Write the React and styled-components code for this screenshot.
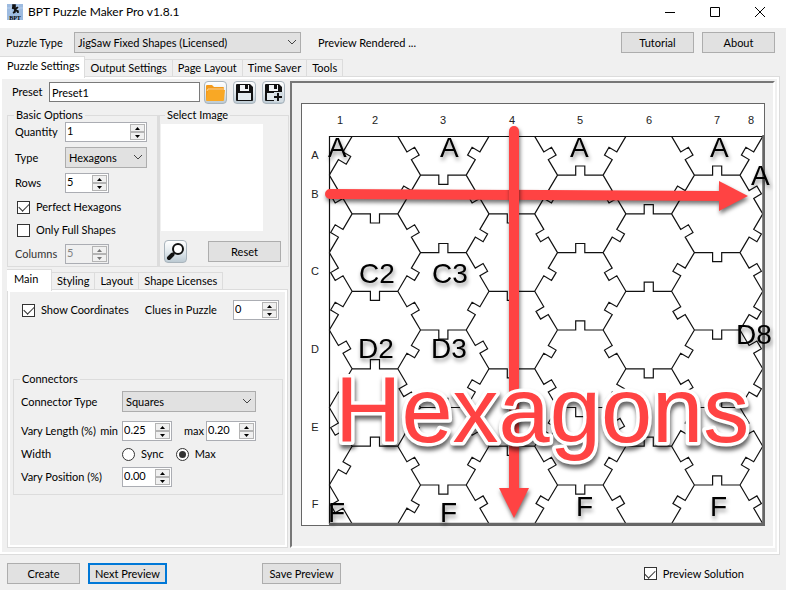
import React, { useState } from 'react';
import styled, { createGlobalStyle, css } from 'styled-components';

const GlobalStyle = createGlobalStyle`
  * {
    box-sizing: border-box;
  }
  body {
    margin: 0;
    background: #f0f0f0;
    color: #000;
    font-family: Lato, "Liberation Sans", sans-serif;
    font-size: 11px;
    line-height: 14px;
  }
  button, input, select {
    font: inherit;
    color: inherit;
    margin: 0;
  }
`;

const Window = styled.div`
  display: flex;
  flex-direction: column;
  min-height: 100vh;
`;

const TitleBar = styled.header`
  display: flex;
  align-items: center;
  height: 28px;
  padding: 0 4px 4px 7px;
  background: #fff;
`;

const Title = styled.h1`
  flex: 1;
  margin: 0 0 0 5px;
  font-size: 12px;
  font-weight: 400;
  line-height: 16px;
`;

const CaptionButton = styled.button`
  display: flex;
  align-items: center;
  justify-content: center;
  width: 45px;
  height: 24px;
  padding: 0;
  border: none;
  background: none;
`;

const Toolbar = styled.div`
  display: flex;
  align-items: center;
  gap: 8px;
  height: 28px;
  padding: 1px 11px 0 6px;
`;

const Label = styled.label`
  white-space: nowrap;
  width: ${({ $width }) => ($width ? `${$width}px` : 'auto')};
  color: ${({ $disabled }) => ($disabled ? '#333' : 'inherit')};
`;

const Status = styled.span`
  flex: 1;
  padding-left: 9px;
`;

const PushButton = styled.button`
  width: ${({ $width }) => $width || 73}px;
  height: 21px;
  padding: 0;
  border: 1px solid #adadad;
  background: #e1e1e1;
  white-space: nowrap;
  ${({ $focused }) => $focused && css`
    border: 2px solid #0078d7;
  `}
`;

const SelectWrap = styled.span`
  position: relative;
  display: inline-block;
  width: ${({ $width }) => $width}px;
  height: 21px;

  select {
    width: 100%;
    height: 100%;
    padding: 0 18px 0 3px;
    border: 1px solid #adadad;
    border-radius: 0;
    background: #e1e1e1;
    appearance: none;
  }
  svg {
    position: absolute;
    right: 4px;
    top: 7px;
    pointer-events: none;
  }
`;

const TabList = styled.div`
  display: flex;
  align-items: flex-end;
  height: ${({ $height }) => $height || 20}px;
`;

const Tab = styled.button`
  height: 17px;
  padding: 0 5px;
  border: 1px solid #dcdcdc;
  border-width: 1px 1px 0 0;
  background: #f0f0f0;
  text-align: left;
  white-space: nowrap;
  ${({ $active }) => $active && css`
    z-index: 1;
    min-width: 45px;
    height: 22px;
    margin-bottom: -2px;
    padding: 0 5px 3px 7px;
    background: #fff;
  `}
`;

const TabPage = styled.div`
  border: 1px solid #dcdcdc;
  background: #f0f0f0;
  box-shadow: inset 0 0 0 2px #fff;
`;

const MainPage = styled(TabPage)`
  display: flex;
  flex: 1;
  align-items: stretch;
  margin-right: 6px;
  padding: 4px 4px 6px 7px;
  border-left: none;
`;

const Settings = styled.div`
  display: flex;
  flex-direction: column;
  flex: 0 0 282px;
`;

const PresetRow = styled.div`
  display: flex;
  align-items: center;
  height: 22px;
  padding-left: 5px;
`;

const TextBox = styled.input`
  width: 151px;
  height: 20px;
  padding: 0 2px;
  border: 1px solid #7a7a7a;
  background: #fff;
`;

const IconButton = styled.button`
  display: flex;
  align-items: center;
  justify-content: center;
  width: 23px;
  height: 23px;
  padding: 0;
  border: 1px solid #a9b4bc;
  border-radius: 4px;
  background: linear-gradient(#fff, #e3eaee 50%, #bccad3);
`;

const IconBar = styled.div`
  display: flex;
  gap: 6px;
  margin-left: 4px;
`;

const Groups = styled.div`
  display: grid;
  grid-template-columns: 151px 1fr;
  margin-top: 5px;
`;

const Group = styled.fieldset`
  min-width: 0;
  margin: 0;
  padding: 0 7px 2px;
  border: 1px solid #dcdcdc;

  legend {
    padding: 0 2px;
    margin-left: -1px;
  }
`;

const Rows = styled.div`
  display: flex;
  flex-direction: column;
  gap: 5px;
`;

const Row = styled.div`
  display: flex;
  align-items: center;
  min-height: 18px;
`;

const CheckLabel = styled.label`
  display: inline-flex;
  align-items: center;
  gap: 6px;
  margin-left: ${({ $indent }) => $indent || 0}px;
  white-space: nowrap;

  input {
    display: grid;
    place-content: center;
    width: 13px;
    height: 13px;
    border: 1px solid #333;
    border-radius: ${({ $round }) => ($round ? '50%' : '0')};
    background: #fff;
    appearance: none;
  }
  input[type='checkbox']:checked::before {
    content: '';
    width: 9px;
    height: 5px;
    margin-top: -2px;
    border: solid #333;
    border-width: 0 0 1px 1px;
    transform: rotate(-45deg);
  }
  input[type='radio']:checked::before {
    content: '';
    width: 7px;
    height: 7px;
    border-radius: 50%;
    background: #333;
  }
`;

const SpinBox = styled.span`
  display: flex;
  width: ${({ $width }) => $width}px;
  height: 20px;
  padding: 1px;
  border: 1px solid #abadb3;
  background: ${({ $disabled }) => ($disabled ? '#f0f0f0' : '#fff')};

  input {
    flex: 1;
    min-width: 0;
    padding: 0 0 2px;
    border: none;
    background: none;
    color: ${({ $disabled }) => ($disabled ? '#838383' : '#000')};
  }
`;

const SpinArrows = styled.span`
  display: flex;
  flex-direction: column;
  width: 15px;

  button {
    display: flex;
    flex: 1;
    align-items: center;
    justify-content: center;
    padding: 0;
    border: 1px solid #b4b4b4;
    background: #f0f0f0;
  }
`;

const ImageGroup = styled(Group)`
  display: flex;
  flex-direction: column;
  padding: 0 7px 3px 1px;
  border-left-width: 2px;

  legend {
    margin-left: 4px;
  }
`;

const ImageBox = styled.div`
  width: 102px;
  height: 107px;
  margin-top: 2px;
  background: #fff;
`;

const ImageActions = styled.div`
  display: flex;
  align-items: center;
  justify-content: space-between;
  margin-top: auto;
  padding-left: 3px;
`;

const OptionTabs = styled.div`
  display: flex;
  flex: 1;
  flex-direction: column;
  padding: 1px 1px 0 0;
`;

const OptionPage = styled(TabPage)`
  flex: 1;
  padding: 10px 4px 10px 5px;
`;

const CoordinatesRow = styled(Row)`
  justify-content: space-between;
  margin-bottom: 52px;
  padding: 0 4px 0 9px;
`;

const Spacer = styled.span`
  flex: 1;
`;

const ConnectorGroup = styled(Group)`
  padding-bottom: 7px;

  ${Rows} {
    gap: 4px;
    padding-top: 5px;
  }
  ${Row}:first-child {
    margin-bottom: 5px;
  }
`;

const VaryLabel = styled.span`
  display: flex;
  justify-content: space-between;
  width: 101px;
  padding-right: 4px;
  white-space: nowrap;
`;

const MaxLabel = styled.label`
  width: 34px;
  padding-right: 2px;
  text-align: right;
`;

const PreviewFrame = styled.section`
  flex: 1;
  margin-left: 1px;
  padding: 20px 8px 0 9px;
  border: 2px solid;
  border-color: #777 #fff #fff #777;
`;

const Board = styled.svg`
  display: block;
  width: 100%;
  overflow: visible;
  font-family: "Liberation Sans", Arial, sans-serif;
`;

const CoordText = styled.text`
  font-size: 11px;
  fill: #222;
  text-anchor: middle;
`;

const CellText = styled.text`
  font-size: 28px;
  filter: drop-shadow(1px 3px 2px rgba(0, 0, 0, 0.45));
`;

const Arrow = styled.g`
  fill: #ff4343;
  stroke: #ff4343;
  stroke-width: 10;
  stroke-linecap: round;
  filter: drop-shadow(1px 3px 2px rgba(0, 0, 0, 0.55));

  polygon {
    stroke: none;
  }
`;

const Caption = styled.text`
  font-size: 92px;
  fill: #ff4343;
  stroke: #fff;
  stroke-width: 7px;
  stroke-linejoin: round;
  paint-order: stroke;
  filter: drop-shadow(1px 4px 2px rgba(0, 0, 0, 0.6));
`;

const Footer = styled.footer`
  display: flex;
  align-items: center;
  height: 35px;
  padding: 2px 42px 0 7px;
`;

const FooterButtons = styled.div`
  display: flex;
  gap: 8px;
  width: 255px;
`;

/* ---------- icons ---------- */

const AppIcon = () => (
  <svg width="16" height="16" viewBox="0 0 16 16">
    <rect width="16" height="16" fill="#9dbbe0" />
    <path d="M4 0v9M11 0v9M0 4h16" stroke="#b9d0ec" />
    <path d="M6 1h2v2h-2zM5 4l4 1 2-2M8 4v4l-2 1M8 6l3 1v2" fill="#111" stroke="#111" strokeWidth="1.6" />
    <text x="8" y="15.5" fontSize="6" fontWeight="700" fontFamily="Liberation Serif, serif" textAnchor="middle">BPT</text>
  </svg>
);

const Chevron = () => (
  <svg width="10" height="7" viewBox="0 0 10 7" fill="none" stroke="#444">
    <path d="M1 1l4 4 4-4" />
  </svg>
);

const FolderIcon = () => (
  <svg width="21" height="19" viewBox="0 0 21 19">
    <path d="M1 17V3q0-1 1-1h5l2 2h9q1 0 1 1v2H4L2 17z" fill="#f39a1b" />
    <path d="M3 7h17l-1 10q0 1-1 1H2q-1 0-1-1z" fill="#f9a825" />
    <path d="M2 8l1-2h16" fill="none" stroke="#fbe3bb" strokeWidth=".8" />
  </svg>
);

const SaveIcon = ({ plus }) => (
  <svg width="19" height="19" viewBox="0 0 19 19">
    <path d="M1 2q0-1 1-1h13l3 3v13q0 1-1 1H2q-1 0-1-1z" fill="#111" />
    <path d="M5 2h9v6H5z" fill="#f2f5f7" />
    <path d="M10 2h3v4h-3z" fill="#111" />
    <path d="M3 10h13v7H3z" fill="#e3eaee" />
    {plus && (
      <>
        <path d="M10 9h9v10H10z" fill="#d3dce2" />
        <path d="M14 10v8M10 14h8" stroke="#111" strokeWidth="2" />
      </>
    )}
  </svg>
);

const SearchIcon = () => (
  <svg width="19" height="19" viewBox="0 0 19 19" fill="none" stroke="#111">
    <circle cx="12" cy="7" r="5" strokeWidth="2" fill="#fff" />
    <path d="M8 11l-1.500 1.500" strokeWidth="2" />
    <path d="M6.500 12.500L3 16" strokeWidth="4" strokeLinecap="round" />
  </svg>
);

/* ---------- form parts ---------- */

const Select = ({ id, width, options }) => (
  <SelectWrap $width={width}>
    <select id={id}>
      {options.map((option) => <option key={option}>{option}</option>)}
    </select>
    <Chevron />
  </SelectWrap>
);

const Spin = ({ id, width, value, disabled }) => (
  <SpinBox $width={width} $disabled={disabled}>
    <input id={id} defaultValue={value} disabled={disabled} />
    <SpinArrows>
      <button type="button" aria-label="Increase" disabled={disabled}>
        <svg width="5" height="3" viewBox="0 0 5 3"><path d="M0 3l2.500-3L5 3z" fill={disabled ? '#777' : '#000'} /></svg>
      </button>
      <button type="button" aria-label="Decrease" disabled={disabled}>
        <svg width="5" height="3" viewBox="0 0 5 3"><path d="M0 0l2.500 3L5 0z" fill={disabled ? '#777' : '#000'} /></svg>
      </button>
    </SpinArrows>
  </SpinBox>
);

const Tabs = ({ names, height }) => {
  const [active, setActive] = useState(names[0]);
  return (
    <TabList role="tablist" $height={height}>
      {names.map((name) => (
        <Tab key={name} role="tab" $active={name === active} onClick={() => setActive(name)}>{name}</Tab>
      ))}
    </TabList>
  );
};

/* ---------- puzzle board ---------- */

const LEFT = 28.3;
const TOP = 33.4;
const PITCH = 68.45; // distance between two columns of hexagons
const SLANT = 22.8;
const HALF = 38.73; // half the height of a hexagon

// side on which the connector of each slanted edge sticks out, top to bottom
const SLANTED = [
  'RLLLLRRLRL',
  'RLRRRRLRRR',
  'LLRRLRLLLR',
  'RRLRLRRRRL',
  'LLRLLLRRLR',
  'RLRLLRRRRL',
  'LRRRRRRLLR',
];

// the same for the horizontal edges: up or down
const FLAT = ['DDUU', 'DUDUD', 'DDDD', 'UUUDD', 'UUDU', 'UDDUU'];

const edgePath = (x0, y0, x1, y1, side) => {
  const dx = x1 - x0;
  const dy = y1 - y0;
  const ox = dy * 0.2 * side;
  const oy = -dx * 0.2 * side;
  const at = (t, out) => `${(x0 + dx * t + ox * out).toFixed(1)} ${(y0 + dy * t + oy * out).toFixed(1)}`;
  return `M${at(0, 0)}L${at(0.4, 0)}L${at(0.4, 1)}L${at(0.6, 1)}L${at(0.6, 0)}L${at(1, 0)}`;
};

const boardPath = [
  ...SLANTED.flatMap((sides, strip) =>
    [...sides].map((side, k) => {
      const x = LEFT + strip * PITCH;
      const fromRight = (strip + k) % 2 === 0;
      return edgePath(
        fromRight ? x + SLANT : x, TOP + k * HALF,
        fromRight ? x : x + SLANT, TOP + (k + 1) * HALF,
        side === 'R' ? 1 : -1
      );
    })
  ),
  ...FLAT.flatMap((sides, col) =>
    [...sides].map((side, i) => {
      const x = LEFT + SLANT + col * PITCH;
      const y = TOP + (col % 2 === 0 ? 2 * i + 2 : 2 * i + 1) * HALF;
      return edgePath(x, y, x + PITCH - SLANT, y, side === 'U' ? 1 : -1);
    })
  ),
].join('');

const COLUMN_LABELS = [39, 74, 142, 211, 279, 348, 416, 450];
const ROW_LABELS = [['A', 56], ['B', 95], ['C', 172], ['D', 250], ['E', 328], ['F', 405]];
const CELLS = [
  ['A', 27, 54], ['A', 139, 54], ['A', 269, 54], ['A', 409, 54], ['A', 450, 82],
  ['C2', 58, 180], ['C3', 131, 180],
  ['D2', 57, 255], ['D3', 130, 255], ['D8', 435, 241],
  ['F', 27, 419], ['F', 139, 419], ['F', 275, 413], ['F', 409, 413],
];

const PuzzlePreview = () => (
  <Board viewBox="0 0 464 423" role="img" aria-label="Hexagons">
    <rect x="0.5" y="0.5" width="463" height="422" fill="#fff" stroke="#666" />
    <path d={boardPath} fill="none" stroke="#111" strokeWidth="1.2" />
    <path d="M28.500 421V33.500H462" fill="none" stroke="#111" strokeWidth="1.2" />
    <path d="M28 421H462.500V32" fill="none" stroke="#666" strokeWidth="2.500" />
    {COLUMN_LABELS.map((x, i) => <CoordText key={x} x={x} y="21">{i + 1}</CoordText>)}
    {ROW_LABELS.map(([name, y]) => <CoordText key={name} x="14" y={y}>{name}</CoordText>)}
    <Arrow>
      <path d="M29 91L420 93" />
      <polygon points="418,78 447,93 418,108" />
    </Arrow>
    <Arrow>
      <path d="M213 28V386" />
      <polygon points="198,385 228,385 213,415" />
    </Arrow>
    {CELLS.map(([name, x, y]) => <CellText key={name + x} x={x} y={y}>{name}</CellText>)}
    <Caption x="34" y="339">Hexagons</Caption>
  </Board>
);

const App = () => {
  return (
    <Window>
      <GlobalStyle />
      <TitleBar>
        <AppIcon />
        <Title>BPT Puzzle Maker Pro v1.8.1</Title>
        <CaptionButton aria-label="Minimize">
          <svg width="10" height="10" viewBox="0 0 10 10"><path d="M0 5.500h10" stroke="#000" /></svg>
        </CaptionButton>
        <CaptionButton aria-label="Maximize">
          <svg width="10" height="10" viewBox="0 0 10 10"><path d="M.5.5h9v9h-9z" fill="none" stroke="#000" /></svg>
        </CaptionButton>
        <CaptionButton aria-label="Close">
          <svg width="10" height="10" viewBox="0 0 10 10"><path d="M0 0l10 10M10 0L0 10" stroke="#000" /></svg>
        </CaptionButton>
      </TitleBar>

      <Toolbar>
        <Label htmlFor="puzzle-type" $width={60}>Puzzle Type</Label>
        <Select id="puzzle-type" width={227} options={['JigSaw Fixed Shapes (Licensed)']} />
        <Status>Preview Rendered ...</Status>
        <PushButton>Tutorial</PushButton>
        <PushButton>About</PushButton>
      </Toolbar>

      <Tabs names={['Puzzle Settings', 'Output Settings', 'Page Layout', 'Time Saver', 'Tools']} />
      <MainPage>
        <Settings>
          <PresetRow>
            <Label htmlFor="preset" $width={37}>Preset</Label>
            <TextBox id="preset" defaultValue="Preset1" />
            <IconBar>
              <IconButton aria-label="Open preset"><FolderIcon /></IconButton>
              <IconButton aria-label="Save preset"><SaveIcon /></IconButton>
              <IconButton aria-label="Save preset as"><SaveIcon plus /></IconButton>
            </IconBar>
          </PresetRow>

          <Groups>
            <Group>
              <legend>Basic Options</legend>
              <Rows>
                <Row>
                  <Label htmlFor="quantity" $width={50}>Quantity</Label>
                  <Spin id="quantity" width={82} value="1" />
                </Row>
                <Row>
                  <Label htmlFor="type" $width={50}>Type</Label>
                  <Select id="type" width={82} options={['Hexagons']} />
                </Row>
                <Row>
                  <Label htmlFor="rows" $width={50}>Rows</Label>
                  <Spin id="rows" width={44} value="5" />
                </Row>
                <Row>
                  <CheckLabel $indent={2}><input type="checkbox" defaultChecked />Perfect Hexagons</CheckLabel>
                </Row>
                <Row>
                  <CheckLabel $indent={2}><input type="checkbox" />Only Full Shapes</CheckLabel>
                </Row>
                <Row>
                  <Label htmlFor="columns" $width={50} $disabled>Columns</Label>
                  <Spin id="columns" width={44} value="5" disabled />
                </Row>
              </Rows>
            </Group>
            <ImageGroup>
              <legend>Select Image</legend>
              <ImageBox />
              <ImageActions>
                <IconButton aria-label="Browse"><SearchIcon /></IconButton>
                <PushButton>Reset</PushButton>
              </ImageActions>
            </ImageGroup>
          </Groups>

          <OptionTabs>
            <Tabs names={['Main', 'Styling', 'Layout', 'Shape Licenses']} height={21} />
            <OptionPage>
              <CoordinatesRow>
                <CheckLabel><input type="checkbox" defaultChecked />Show Coordinates</CheckLabel>
                <Label htmlFor="clues">Clues in Puzzle</Label>
                <Spin id="clues" width={46} value="0" />
              </CoordinatesRow>
              <ConnectorGroup>
                <legend>Connectors</legend>
                <Rows>
                  <Row>
                    <Label htmlFor="connector" $width={101}>Connector Type</Label>
                    <Select id="connector" width={134} options={['Squares']} />
                  </Row>
                  <Row>
                    <VaryLabel><span>Vary Length (%)</span><label htmlFor="vary-min">min</label></VaryLabel>
                    <Spin id="vary-min" width={50} value="0.25" />
                    <MaxLabel htmlFor="vary-max">max</MaxLabel>
                    <Spin id="vary-max" width={50} value="0.20" />
                  </Row>
                  <Row>
                    <VaryLabel>Width</VaryLabel>
                    <CheckLabel $round><input type="radio" name="width" />Sync</CheckLabel>
                    <CheckLabel $round $indent={12}><input type="radio" name="width" defaultChecked />Max</CheckLabel>
                  </Row>
                  <Row>
                    <Label htmlFor="vary-position" $width={101}>Vary Position (%)</Label>
                    <Spin id="vary-position" width={50} value="0.00" />
                  </Row>
                </Rows>
              </ConnectorGroup>
            </OptionPage>
          </OptionTabs>
        </Settings>

        <PreviewFrame>
          <PuzzlePreview />
        </PreviewFrame>
      </MainPage>

      <Footer>
        <FooterButtons>
          <PushButton>Create</PushButton>
          <PushButton $width={79} $focused>Next Preview</PushButton>
        </FooterButtons>
        <PushButton $width={79}>Save Preview</PushButton>
        <Spacer />
        <CheckLabel><input type="checkbox" defaultChecked />Preview Solution</CheckLabel>
      </Footer>
    </Window>
  );
};

export default App;
